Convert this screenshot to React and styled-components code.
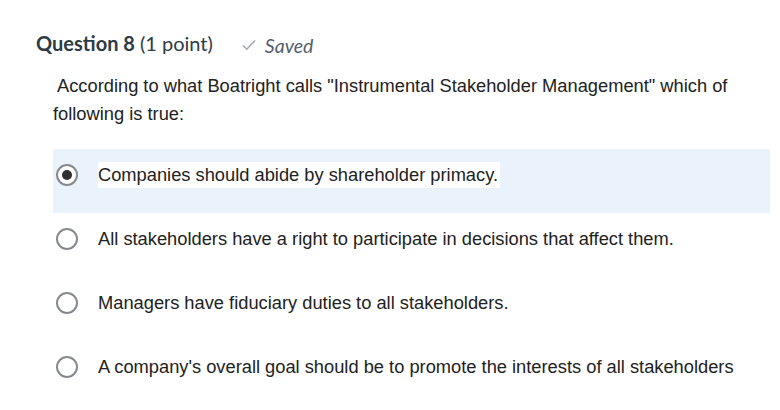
import React from "react";
import styled, { createGlobalStyle } from "styled-components";

const GlobalStyle = createGlobalStyle`
  body {
    margin: 0;
    background: #fff;
  }
`;

const Page = styled.div`
  width: 780px;
  height: 410px;
  padding: 31px 10px 0 36px;
  box-sizing: border-box;
  overflow: hidden;
`;

const Header = styled.div`
  display: flex;
  align-items: baseline;
  font-family: Lato, "Open Sans", sans-serif;
  font-size: 20px;
  color: #2d3b45;
  height: 28px;
`;

const Title = styled.span`
  font-weight: 700;
`;

const Points = styled.span`
  font-weight: 400;
  margin-left: 5px;
`;

const Saved = styled.span`
  display: flex;
  align-items: center;
  gap: 9px;
  margin-left: 29px;
  font-size: 19.5px;
  font-style: italic;
  color: #56606a;
`;

const Prompt = styled.p`
  margin: 13px 0 0 17px;
  width: 700px;
  font-family: "Liberation Sans", Arial, sans-serif;
  font-size: 18.3px;
  line-height: 28px;
  color: #222;
  text-indent: 4px;
`;

const Options = styled.div`
  display: flex;
  flex-direction: column;
  margin: 21px 0 0 17px;
  width: 717px;
`;

const Option = styled.label`
  display: flex;
  align-items: center;
  gap: 20px;
  height: 64px;
  padding: 0 0 12px 3px;
  box-sizing: border-box;
  background: ${(p) => (p.$selected ? "#eaf3fc" : "transparent")};
`;

const Radio = styled.span`
  width: 22px;
  height: 22px;
  box-sizing: border-box;
  flex: none;
  border: 2px solid #868a8e;
  border-radius: 50%;
  display: flex;
  align-items: center;
  justify-content: center;
  background: #fff;

  &::after {
    content: "";
    width: 10px;
    height: 10px;
    border-radius: 50%;
    background: ${(p) => (p.$checked ? "#2f2f2f" : "transparent")};
  }
`;

const OptionText = styled.span`
  font-family: "Liberation Sans", Arial, sans-serif;
  font-size: 18.3px;
  color: #222;
  background: ${(p) => (p.$selected ? "#fff" : "transparent")};
  padding: 2px 2px 2px 0;
`;

const Check = () => (
  <svg width="14" height="12" viewBox="0 0 14 12">
    <path d="M1 6.5 L4.8 10.2 L13 1.5" fill="none" stroke="#a3aab0" strokeWidth="1.6" />
  </svg>
);

const options = [
  "Companies should abide by shareholder primacy.",
  "All stakeholders have a right to participate in decisions that affect them.",
  "Managers have fiduciary duties to all stakeholders.",
  "A company's overall goal should be to promote the interests of all stakeholders",
];

export default function App() {
  return (
    <Page>
      <GlobalStyle />
      <Header>
        <Title>Question 8</Title>
        <Points>(1 point)</Points>
        <Saved>
          <Check />
          Saved
        </Saved>
      </Header>
      <Prompt>
        According to what Boatright calls "Instrumental Stakeholder Management" which of following is true:
      </Prompt>
      <Options>
        {options.map((o, i) => (
          <Option key={i} $selected={i === 0}>
            <Radio $checked={i === 0} />
            <OptionText $selected={i === 0}>{o}</OptionText>
          </Option>
        ))}
      </Options>
    </Page>
  );
}
